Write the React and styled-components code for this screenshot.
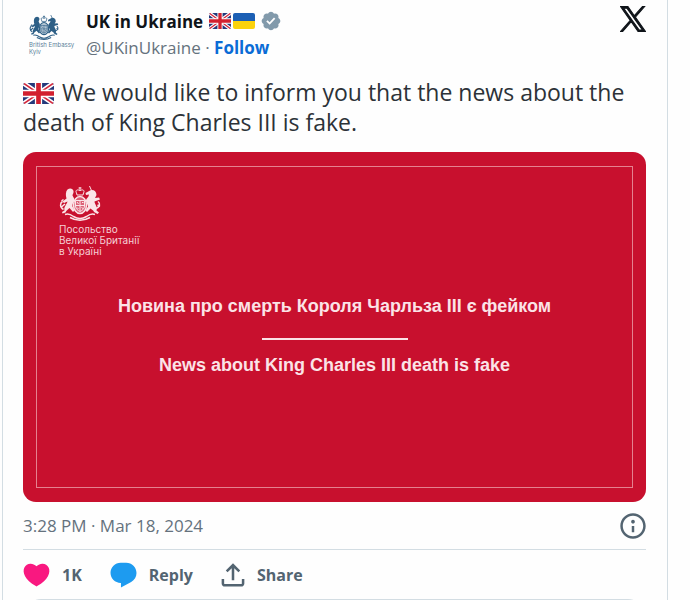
import React from 'react';
import styled, { createGlobalStyle } from 'styled-components';

const GlobalStyle = createGlobalStyle`
  * {
    box-sizing: border-box;
  }

  body {
    margin: 0;
    background: #fefefe;
    color: #0f1419;
    font-family: 'Open Sans', 'Noto Sans', sans-serif;
  }
`;

const UkFlag = ({ width, height }) => (
  <Flag width={width} height={height} viewBox="0 0 60 40" preserveAspectRatio="none">
    <rect width="60" height="40" rx="4" fill="#24387a" />
    <path d="M2 1L58 39M58 1L2 39" stroke="#fff" strokeWidth="9" />
    <path d="M2 1L58 39M58 1L2 39" stroke="#d2273c" strokeWidth="3" />
    <path d="M30 0V40M0 20H60" stroke="#fff" strokeWidth="14" />
    <path d="M30 0V40M0 20H60" stroke="#d2202f" strokeWidth="9" />
  </Flag>
);

const UkraineFlag = ({ width, height }) => (
  <Flag width={width} height={height} viewBox="0 0 22 16">
    <path d="M0 8V2a2 2 0 0 1 2-2h18a2 2 0 0 1 2 2v6z" fill="#1c5fb4" />
    <path d="M0 8v6a2 2 0 0 0 2 2h18a2 2 0 0 0 2-2V8z" fill="#fbd20c" />
  </Flag>
);

const Crest = ({ width, height, color, shade }) => (
  <Flag width={width} height={height} viewBox="0 0 84 70">
    {/* crown */}
    <path d="M35 14c-3-5 1-8 7-5 6-3 10 0 7 5l-1 4H36z" fill="none" stroke={color} strokeWidth="2" />
    <path d="M42 2v8M39 4h6" stroke={color} strokeWidth="2" />
    {/* lion */}
    <path
      d="M17 7c5-4 11-2 12 3 1 4-2 6-2 9 2 4 5 7 3 12-2 4-4 6-3 10l4 8-3 3-7-8c-3 3-6 4-8 9l-6 2-1-3 5-3c-2-8 5-12 6-18l-7 3-3-3 8-6c-2-6-2-14 2-18z"
      fill={color}
    />
    <path d="M9 47C1 43 2 34 7 31M5 30l4-3M12 36l-7 6" fill="none" stroke={color} strokeWidth="3" />
    {/* unicorn */}
    <path d="M61 0l4 9" stroke={color} strokeWidth="2" />
    <path
      d="M64 8c6-1 11 3 11 10l-3 6 8-1 2 4-11 4c0 6 7 10 4 18l5 4-3 3-7-4c-1-4-5-5-7-7l-7 7-3-3 5-8c-1-5-5-9-4-13 1-4 6-6 6-11l-6 1-1-4z"
      fill={color}
    />
    <path d="M74 45c8-3 9-10 4-14M77 38l5 3" fill="none" stroke={color} strokeWidth="3" />
    {/* shield with the garter round it */}
    <ellipse cx="42" cy="38" rx="13" ry="17" fill={shade} stroke={color} strokeWidth="3" />
    <path d="M33 29h18v11c0 6-5 9-9 11-4-2-9-5-9-11z" fill="none" stroke={color} strokeWidth="2" />
    <path d="M42 29v21M33 39h18M36 32l3 4M46 33h3M36 43l3 3M45 43l3 2" stroke={color} strokeWidth="2" />
    <path d="M12 57c7-3 13 1 17 4 8 5 18 5 26 0 4-3 10-7 17-4M22 63c12 7 28 7 40 0" fill="none" stroke={color} strokeWidth="3" />
  </Flag>
);

const VerifiedIcon = () => (
  <Icon width="20" height="20" viewBox="1 1 22 22" fill="#829aab">
    <path d="M22.25 12c0-1.43-.88-2.67-2.19-3.34.46-1.39.2-2.9-.81-3.91s-2.52-1.27-3.91-.81c-.66-1.31-1.91-2.19-3.34-2.19s-2.67.88-3.33 2.19c-1.4-.46-2.91-.2-3.92.81s-1.26 2.52-.8 3.91c-1.31.67-2.2 1.91-2.2 3.34s.89 2.67 2.2 3.34c-.46 1.39-.21 2.9.8 3.91s2.52 1.26 3.91.81c.67 1.31 1.91 2.19 3.34 2.19s2.68-.88 3.34-2.19c1.39.45 2.9.2 3.91-.81s1.27-2.52.81-3.91c1.31-.67 2.19-1.91 2.19-3.34zm-11.71 4.2L6.8 12.46l1.41-1.42 2.26 2.26 4.8-5.23 1.47 1.36-6.2 6.77z" />
  </Icon>
);

const XLogo = () => (
  <Icon width="26" height="26" viewBox="0 -0.5 24 25" fill="#0f1419" stroke="#0f1419" strokeWidth="1">
    <path d="M14.258 10.152L23.176 0h-2.113l-7.747 8.813L7.133 0H0l9.352 13.328L0 23.973h2.113l8.176-9.309 6.531 9.309h7.133zm-2.895 3.293l-.949-1.328L2.875 1.56h3.246l6.086 8.523.945 1.328 7.91 11.078h-3.246zm0 0" />
  </Icon>
);

const InfoIcon = () => (
  <Icon width="26" height="26" viewBox="1.5 1.5 21 21" fill="#536471">
    <path d="M13.5 8.5c0 .83-.67 1.5-1.5 1.5s-1.5-.67-1.5-1.5S11.17 7 12 7s1.5.67 1.5 1.5zM13 17v-5h-2v5h2zm-1 5.25c5.66 0 10.25-4.59 10.25-10.25S17.66 1.75 12 1.75 1.75 6.34 1.75 12 6.34 22.25 12 22.25zM20.25 12c0 4.56-3.69 8.25-8.25 8.25S3.75 16.56 3.75 12 7.44 3.75 12 3.75s8.25 3.69 8.25 8.25z" />
  </Icon>
);

const HeartIcon = () => (
  <Icon width="27" height="24" viewBox="1.5 3.2 21 18.2" fill="#f91880">
    <path d="M20.884 13.19c-1.351 2.48-4.001 5.12-8.379 7.67l-.503.3-.504-.3c-4.379-2.55-7.029-5.19-8.382-7.67-1.36-2.5-1.41-4.86-.514-6.67.887-1.79 2.647-2.91 4.601-3.01 1.651-.09 3.368.56 4.798 2.01 1.429-1.45 3.146-2.1 4.796-2.01 1.954.1 3.714 1.22 4.601 3.01.896 1.81.846 4.17-.514 6.67z" />
  </Icon>
);

const ReplyIcon = () => (
  <Icon width="27" height="26" viewBox="1.5 1.5 21 20.5" fill="#1d9bf0">
    <path d="M1.751 10c0-4.42 3.584-8 8.005-8h4.366c4.49 0 8.129 3.64 8.129 8.13 0 2.96-1.607 5.68-4.196 7.11l-8.054 4.46v-3.69h-.067c-4.49.1-8.183-3.51-8.183-8.01z" />
  </Icon>
);

const ShareIcon = () => (
  <Icon width="24" height="24" viewBox="2.5 2.3 19 19" fill="#536471">
    <path d="M12 2.59l5.7 5.7-1.41 1.42L13 6.41V16h-2V6.41l-3.3 3.3-1.41-1.42L12 2.59zM21 15l-.02 3.51c0 1.38-1.12 2.49-2.5 2.49H5.5C4.11 21 3 19.88 3 18.5V15h2v3.5c0 .28.22.5.5.5h12.98c.28 0 .5-.22.5-.5L19 15h2z" />
  </Icon>
);

const App = () => (
  <>
    <GlobalStyle />
    <Tweet>
      <Header>
        <Avatar>
          <Crest width={30} height={27} color="#2d5f86" shade="#c3d3de" />
          <AvatarText>
            British Embassy
            <br />
            Kyiv
          </AvatarText>
        </Avatar>
        <Author>
          <NameRow>
            <Name>UK in Ukraine</Name>
            <Flags>
              <UkFlag width={22} height={16} />
              <UkraineFlag width={22} height={16} />
            </Flags>
            <VerifiedIcon />
          </NameRow>
          <HandleRow>
            @UKinUkraine · <FollowLink href="#follow">Follow</FollowLink>
          </HandleRow>
        </Author>
        <LogoLink href="#x" aria-label="View on X">
          <XLogo />
        </LogoLink>
      </Header>
      <Message>
        <UkFlag width={31} height={21} /> We would like to inform you that the news about the death of
        King Charles III is fake.
      </Message>
      <Media>
        <Frame>
          <Embassy>
            <Crest width={42} height={35} color="#fbe4e7" shade="#dc6277" />
            <EmbassyText>
              Посольство
              <br />
              Великої Британії
              <br />
              в Україні
            </EmbassyText>
          </Embassy>
          <Headline>Новина про смерть Короля Чарльза III є фейком</Headline>
          <Rule />
          <Headline>News about King Charles III death is fake</Headline>
        </Frame>
      </Media>
      <Meta>
        <time dateTime="2024-03-18T15:28">3:28 PM · Mar 18, 2024</time>
        <IconButton type="button" aria-label="Info">
          <InfoIcon />
        </IconButton>
      </Meta>
      <Actions>
        <Action type="button">
          <HeartIcon />
          1K
        </Action>
        <Action type="button">
          <ReplyIcon />
          Reply
        </Action>
        <Action type="button">
          <ShareIcon />
          Share
        </Action>
      </Actions>
      <MoreButton type="button" aria-label="Read more" />
    </Tweet>
  </>
);

const Icon = styled.svg`
  display: block;
  flex: none;
`;

const Flag = styled.svg`
  flex: none;
  vertical-align: -3px;
`;

const Tweet = styled.article`
  height: 100vh;
  margin: 0 22px 0 2px;
  padding: 6px 21px 0 20px;
  overflow: hidden;
  border: solid #d3dde3;
  border-width: 0 1px;
`;

const Header = styled.header`
  display: flex;
  align-items: flex-start;
`;

const Avatar = styled.div`
  display: flex;
  flex-direction: column;
  width: 52px;
  margin: 8px 5px 0 6px;
`;

const AvatarText = styled.span`
  color: #5b7f9b;
  font-family: Inter, sans-serif;
  font-size: 6px;
  line-height: 7px;
  white-space: nowrap;
`;

const Author = styled.div`
  flex: 1;
`;

const NameRow = styled.div`
  display: flex;
  align-items: center;
  gap: 6px;
  height: 30px;
`;

const Name = styled.span`
  font-size: 17px;
  font-weight: 700;
`;

const Flags = styled.span`
  display: flex;
  gap: 2px;
`;

const HandleRow = styled.div`
  color: #65727d;
  font-size: 17px;
  line-height: 24px;
`;

const FollowLink = styled.a`
  color: #0a6cd6;
  font-weight: 700;
  text-decoration: none;
`;

const LogoLink = styled.a`
  display: block;
`;

const Message = styled.p`
  margin: 17px 0 15px;
  color: #2c3238;
  font-size: 23px;
  line-height: 30px;

  ${Flag} {
    margin-right: 2px;
  }
`;

const Media = styled.div`
  padding: 14px 13px;
  border-radius: 13px;
  background: #c8102e;
`;

const Frame = styled.div`
  display: flex;
  flex-direction: column;
  align-items: center;
  height: 322px;
  padding: 19px 22px;
  border: 1px solid #e5818f;
`;

const Embassy = styled.div`
  display: flex;
  flex-direction: column;
  align-self: flex-start;
  gap: 3px;
  margin-bottom: 37px;
`;

const EmbassyText = styled.span`
  color: #f6cfd5;
  font-family: Inter, sans-serif;
  font-size: 10px;
  line-height: 11px;
`;

const Headline = styled.div`
  color: #fbe3e7;
  font-family: 'Liberation Sans', Arial, sans-serif;
  font-size: 18px;
  font-weight: 700;
  line-height: 24px;
`;

const Rule = styled.hr`
  width: 146px;
  height: 2px;
  margin: 20px 0 13px;
  border: 0;
  background: #fbe3e7;
`;

const Meta = styled.div`
  display: flex;
  align-items: center;
  justify-content: space-between;
  height: 48px;
  border-bottom: 1px solid #d3dde3;
  color: #65727d;
  font-size: 17px;
`;

const IconButton = styled.button`
  padding: 0;
  border: 0;
  background: none;
`;

const Actions = styled.div`
  display: flex;
  align-items: center;
  gap: 28px;
  height: 49px;
`;

const Action = styled.button`
  display: flex;
  align-items: center;
  gap: 12px;
  padding: 0;
  border: 0;
  background: none;
  color: #536471;
  font-family: inherit;
  font-size: 16px;
  font-weight: 700;
`;

const MoreButton = styled.button`
  width: 100%;
  height: 36px;
  border: 1px solid #d3dde3;
  border-radius: 18px;
  background: none;
`;

export default App;
